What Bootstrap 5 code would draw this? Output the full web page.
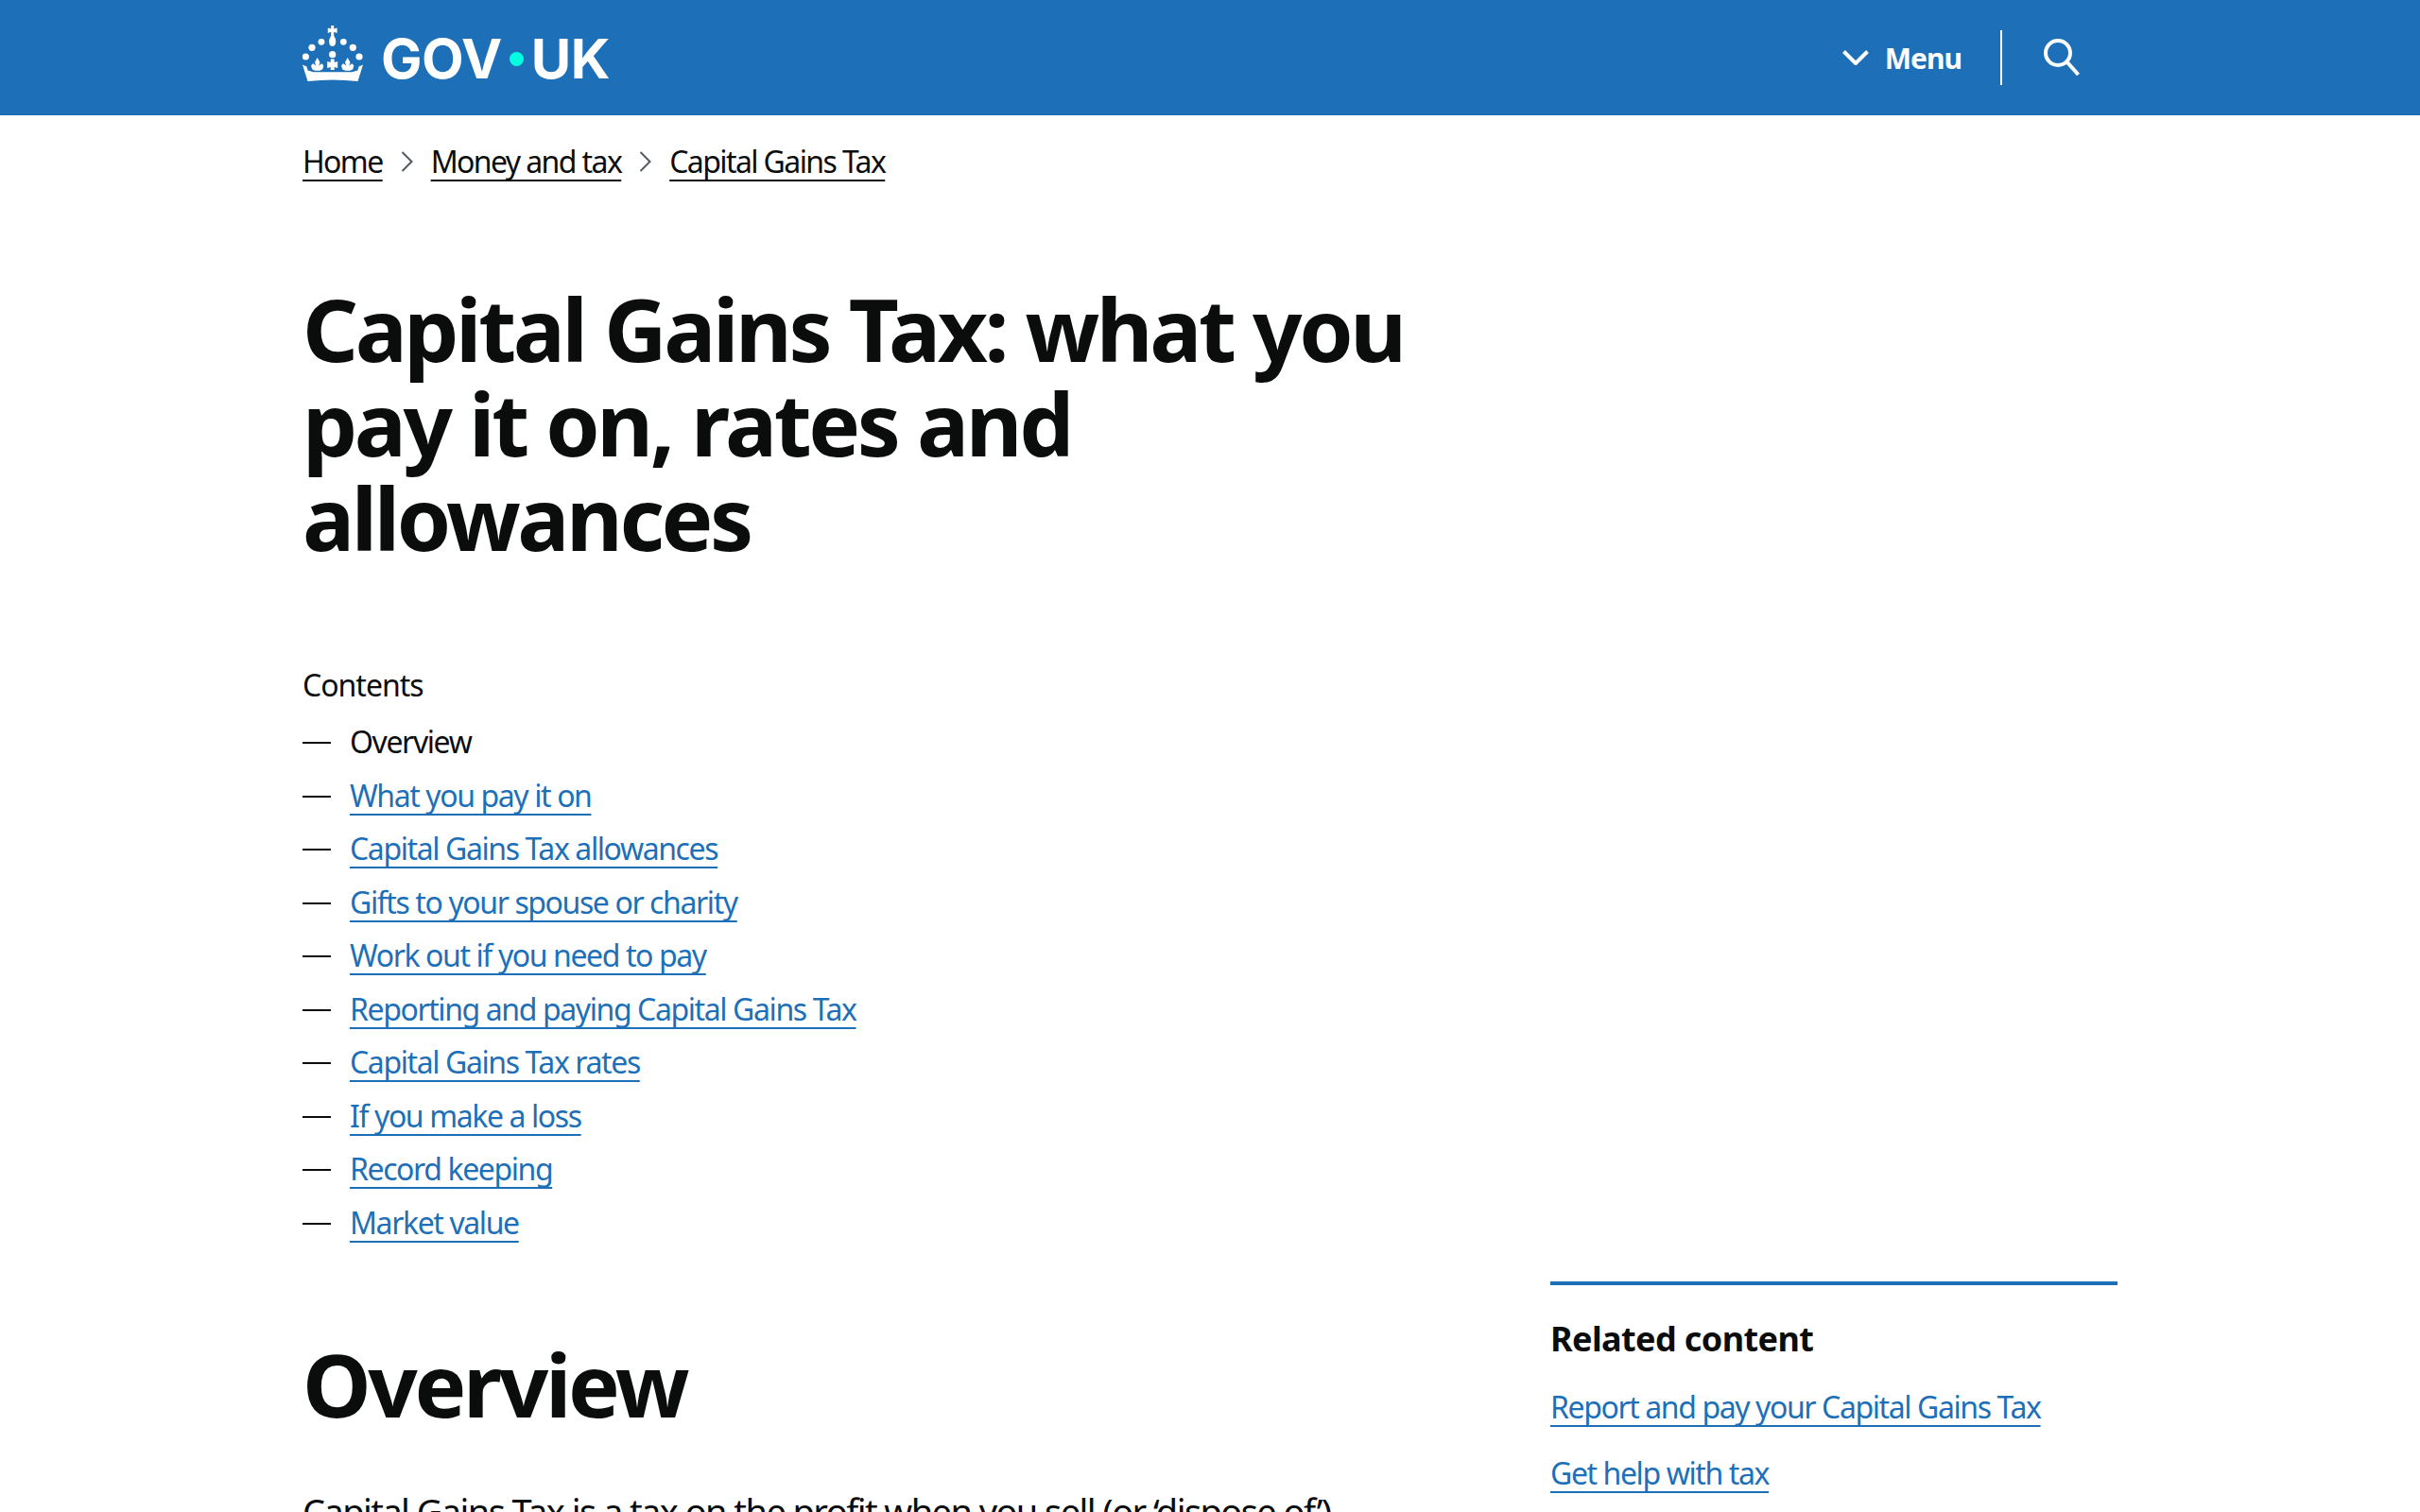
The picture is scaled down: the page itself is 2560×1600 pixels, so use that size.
<!DOCTYPE html>
<html lang="en">
<head>
  <meta charset="UTF-8"/>
  <title>Capital Gains Tax: what you pay it on, rates and allowances - GOV.UK</title>
  <link href="https://cdn.jsdelivr.net/npm/bootstrap@5.3.0/dist/css/bootstrap.min.css" rel="stylesheet"/>
  <style>
    html, body { height: 100%; overflow: hidden; }
    body { font-family: "Noto Sans", sans-serif; color: #0b0c0c; font-size: 32px; letter-spacing: -1.4px; }
    a { color: #1d70b8; text-decoration-thickness: 2px; text-underline-offset: 7px; text-decoration-skip-ink: none; }
    .wrap { width: 1920px; margin: 0 auto; }
    .site-head { background: #1d70b8; height: 122px; }
    .site-head .wrap { height: 122px; }
    .logo { color: #fff; font-family: Inter, sans-serif; font-weight: 700; font-size: 58px; letter-spacing: -.5px; line-height: 1; text-decoration: none; }
    .logo-mark { margin: 0 18px 8px 0; }
    .logo-word { margin-top: 2px; }
    .logo-dot { width: 15px; height: 15px; border-radius: 50%; background: #00ffe0; margin: 2px 8px 0; }
    .head-tools { margin-right: 40px; }
    .menu-btn { color: #fff; font-size: 30px; font-weight: 700; letter-spacing: -1px; gap: 17px; }
    .head-sep { width: 2px; height: 58px; background: #fff; margin: 0 44px 0 41px; }
    .crumbs { padding-top: 30px; line-height: 38px; letter-spacing: -1.6px; }
    .crumbs a { color: #0b0c0c; }
    .crumb-sep { margin: 0 19px; }
    .page-title { font-size: 92px; line-height: 100px; font-weight: 700; letter-spacing: -3.4px; margin: 108px 0 0; }
    .toc { margin-top: 103px; letter-spacing: -1px; }
    .toc-list { list-style: none; padding: 0; margin: 16px 0 0; letter-spacing: -1.4px; }
    .toc-list li { display: flex; line-height: 40px; margin-bottom: 16.5px; }
    .toc-list li::before { content: ""; width: 30px; height: 2px; background: #0b0c0c; margin: 20px 20px 0 0; flex: none; }
    .article-row { margin-top: 26px; }
    .sec-title { font-size: 92px; line-height: 100px; font-weight: 700; letter-spacing: -3.4px; margin: 59px 0 59px; }
    .body-text { font-size: 38px; line-height: 50px; letter-spacing: -1.57px; }
    .side-col { padding-left: 40px; }
    .side-rule { border-top: 4px solid #1d70b8; padding-top: 32px; }
    .side-title { font-size: 36px; line-height: 50px; font-weight: 700; letter-spacing: -.6px; margin-bottom: 27px; }
    .side-link { line-height: 40px; margin-bottom: 30px; }
  </style>
</head>
<body>
  <!-- Header -->
  <header class="site-head">
    <div class="wrap d-flex align-items-center justify-content-between">
      <a href="#" class="logo d-flex align-items-center">
        <svg class="logo-mark" width="65" height="60" viewBox="5 6 65 60" fill="#fff" aria-hidden="true">
          <path d="M35.200 6h3v3.600l3.400-1.200v5.600l-3.400-1.200V17l1.400 2.400c1.400 3.400.6 8.600-2.900 8.600s-4.300-5.200-2.900-8.600l1.400-2.400v-4.200l-3.400 1.200V8.400l3.400 1.200z"/>
          <circle cx="25" cy="23.300" r="3.400"/><circle cx="48.300" cy="23.300" r="3.400"/>
          <circle cx="15" cy="29.300" r="3.600"/><circle cx="58.300" cy="29.300" r="3.600"/>
          <circle cx="8.300" cy="39" r="3.600"/><circle cx="65" cy="39" r="3.600"/>
          <circle cx="36.700" cy="36.700" r="3.600"/>
          <path d="M20.700 40l2.800 5-1.400 3.600 3.200-2.400 2 2-1 4-3 1.600h-5.200l-3-1.600-1-4 2-2 3.200 2.400-1.400-3.600z"/>
          <path d="M52.700 40l2.800 5-1.400 3.600 3.200-2.400 2 2-1 4-3 1.600h-5.200l-3-1.600-1-4 2-2 3.200 2.400-1.400-3.600z"/>
          <path d="M34.700 41.500h4v3.500l3.500-1v7l-3.500-1v3h-4v-3l-3.500 1v-7l3.500 1z"/>
          <path d="M5 47.500l4.500 2 1 4 3.500 1 2.500.8h41l2.500-.8 3.500-1 1-4 4.500-2-5.500 17.500q-26.500-3-53 0z"/>
        </svg>
        <span class="logo-word">GOV</span><span class="logo-dot"></span><span class="logo-word">UK</span>
      </a>
      <div class="head-tools d-flex align-items-center">
        <div class="menu-btn d-flex align-items-center">
          <svg width="28" height="16" viewBox="0 0 28 16" fill="none" stroke="#fff" stroke-width="4"><path d="M1.500 1.500L14 14 26.500 1.500"/></svg>
          <span>Menu</span>
        </div>
        <div class="head-sep"></div>
        <svg width="38" height="40" viewBox="0 0 38 40" fill="none" stroke="#fff" stroke-width="4"><circle cx="15" cy="15" r="13"/><path d="M24.500 24.500L36.500 38"/></svg>
      </div>
    </div>
  </header>

  <div class="wrap">
    <nav class="crumbs d-flex align-items-center">
      <a href="#">Home</a>
      <svg class="crumb-sep" width="13" height="24" viewBox="0 0 13 24" fill="none" stroke="#505a5f" stroke-width="2"><path d="M1.500 2l10 10-10 10"/></svg>
      <a href="#">Money and tax</a>
      <svg class="crumb-sep" width="13" height="24" viewBox="0 0 13 24" fill="none" stroke="#505a5f" stroke-width="2"><path d="M1.500 2l10 10-10 10"/></svg>
      <a href="#">Capital Gains Tax</a>
    </nav>

    <div class="row gx-0">
      <div class="col-8">
        <h1 class="page-title">Capital Gains Tax: what you pay it on, rates and allowances</h1>
        <section class="toc">
          <div>Contents</div>
          <ul class="toc-list">
            <li>Overview</li>
            <li><a href="#">What you pay it on</a></li>
            <li><a href="#">Capital Gains Tax allowances</a></li>
            <li><a href="#">Gifts to your spouse or charity</a></li>
            <li><a href="#">Work out if you need to pay</a></li>
            <li><a href="#">Reporting and paying Capital Gains Tax</a></li>
            <li><a href="#">Capital Gains Tax rates</a></li>
            <li><a href="#">If you make a loss</a></li>
            <li><a href="#">Record keeping</a></li>
            <li><a href="#">Market value</a></li>
          </ul>
        </section>
      </div>
    </div>

    <div class="row gx-0 article-row">
      <main class="col-8">
        <h2 class="sec-title">Overview</h2>
        <p class="body-text">Capital Gains Tax is a tax on the profit when you sell (or ‘dispose of’)</p>
      </main>
      <aside class="col-4 side-col">
        <div class="side-rule">
          <div class="side-title">Related content</div>
          <div class="side-link"><a href="#">Report and pay your Capital Gains Tax</a></div>
          <div class="side-link"><a href="#">Get help with tax</a></div>
        </div>
      </aside>
    </div>
  </div>
</body>
</html>
